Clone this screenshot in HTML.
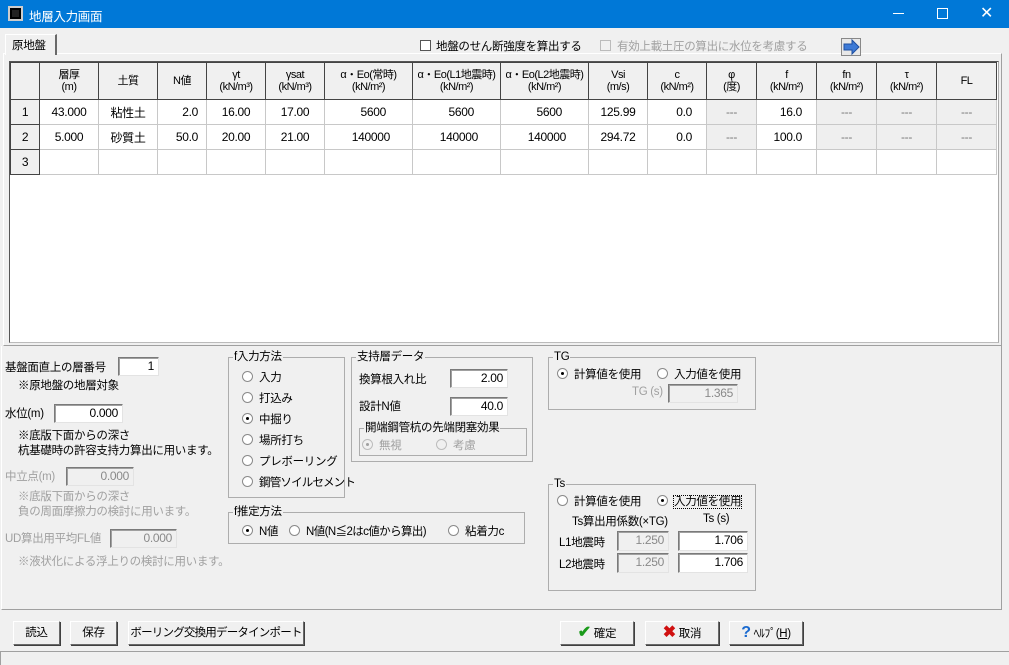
<!DOCTYPE html>
<html><head><meta charset="utf-8"><style>
*{box-sizing:border-box;margin:0;padding:0}
body{width:1009px;height:665px;background:#f0f0f0;font-family:"Liberation Sans","Noto Sans CJK JP",sans-serif;font-size:11.5px;letter-spacing:-0.3px;color:#000;position:relative;overflow:hidden}
.a{position:absolute;white-space:nowrap}
.g{color:#a0a0a0}
.inp{position:absolute;background:#fff;border:1px solid #7a7a7a;border-right-color:#e3e3e3;border-bottom-color:#e3e3e3;box-shadow:inset 1px 1px 0 #a0a0a0;text-align:right;padding-right:4px;font-size:12px;line-height:16px}
.inp.d{background:#f0f0f0;color:#8a8a8a}
.grp{position:absolute;border:1px solid #adadad}
.grp>.t{position:absolute;top:-8px;left:4px;background:#f0f0f0;padding:0 1px;line-height:14px;white-space:nowrap}
.r{display:inline-block;width:11px;height:11px;border-radius:50%;border:1px solid #8a8a8a;background:#fff;vertical-align:-1px;margin-right:6px;position:relative}
.r.on::after{content:"";position:absolute;left:3px;top:3px;width:3px;height:3px;border-radius:50%;background:#000}
.r.dis{background:#f0f0f0;border-color:#bcbcbc}
.r.dis.on::after{background:#a0a0a0}
.btn{position:absolute;border:1px solid #fff;border-right-color:#696969;border-bottom-color:#696969;box-shadow:1px 1px 0 #404040;background:#f0f0f0;text-align:center;line-height:22px;height:24px;white-space:nowrap}
table{position:absolute;left:10px;top:62px;border-collapse:collapse;background:#fff;table-layout:fixed}
td{border:1px solid #c8c8c8;height:25px;text-align:right;padding-right:8px;font-size:12px}
th{background:#f0f0f0;border:1px solid #444;font-weight:normal;font-size:11px;letter-spacing:-0.5px;line-height:12px;height:37px;text-align:center;white-space:nowrap;overflow:hidden}
td.h{background:#f0f0f0;border:1px solid #444;text-align:center;padding:0}
td.gr{background:#efefef;color:#777;text-align:center;padding:0}
td.c{text-align:center;padding:0}
</style></head><body>
<!-- title -->
<div class="a" style="left:0;top:0;width:1009px;height:28px;background:#0078d7"></div>
<div class="a" style="left:8px;top:6px;width:15px;height:15px;background:#222;border:2px solid #ccc;box-shadow:inset 0 0 0 2px #000"></div>
<div class="a" style="left:29px;top:6px;color:#fff;font-size:12.5px">地層入力画面</div>
<div class="a" style="left:893px;top:13px;width:11px;height:1px;background:#fff"></div>
<div class="a" style="left:937px;top:8px;width:11px;height:11px;border:1px solid #fff"></div>
<div class="a" style="left:980px;top:3px;color:#fff;font-size:16px">✕</div>
<!-- tab panel -->
<div class="a" style="left:3px;top:53px;width:999px;height:293px;border:1px solid #fff;border-right-color:#a0a0a0;border-bottom-color:#a0a0a0"></div>
<div class="a" style="left:5px;top:34px;width:52px;height:21px;background:#f0f0f0;border:1px solid #fff;border-right:2px solid #696969;border-bottom:none;padding:2px 0 0 6px">原地盤</div>
<div class="a" style="left:420px;top:40px;width:11px;height:11px;border:1px solid #555;background:#fff"></div>
<div class="a" style="left:436px;top:38px">地盤のせん断強度を算出する</div>
<div class="a" style="left:600px;top:40px;width:11px;height:11px;border:1px solid #bbb;background:#f0f0f0"></div>
<div class="a g" style="left:617px;top:38px">有効上載土圧の算出に水位を考慮する</div>
<svg class="a" style="left:841px;top:38px" width="20" height="18"><rect x="0.5" y="0.5" width="19" height="17" fill="#e8e8e8" stroke="#888"/><path d="M3 6h8V2l7 7-7 7v-4H3z" fill="#3d7ad6" stroke="#1e4fa0"/></svg>
<!-- grid -->
<div class="a" style="left:9px;top:61px;width:990px;height:282px;background:#fff;border:1px solid #555;border-right-color:#aaa;border-bottom-color:#bbb"></div>
<table>
<colgroup><col style="width:29px"><col style="width:59px"><col style="width:59px"><col style="width:49px"><col style="width:59px"><col style="width:59px"><col style="width:88px"><col style="width:88px"><col style="width:88px"><col style="width:59px"><col style="width:59px"><col style="width:50px"><col style="width:60px"><col style="width:60px"><col style="width:60px"><col style="width:60px"></colgroup>
<tr><th></th><th>層厚<br>(m)</th><th>土質</th><th>N値</th><th>γt<br>(kN/m³)</th><th>γsat<br>(kN/m³)</th><th>α・Eo(常時)<br>(kN/m²)</th><th>α・Eo(L1地震時)<br>(kN/m²)</th><th>α・Eo(L2地震時)<br>(kN/m²)</th><th>Vsi<br>(m/s)</th><th>c<br>(kN/m²)</th><th>φ<br>(度)</th><th>f<br>(kN/m²)</th><th>fn<br>(kN/m²)</th><th>τ<br>(kN/m²)</th><th>FL</th></tr>
<tr><td class="h">1</td><td class="c">43.000</td><td class="c">粘性土</td><td>2.0</td><td class="c">16.00</td><td class="c">17.00</td><td style="padding-right:26px">5600</td><td style="padding-right:26px">5600</td><td style="padding-right:26px">5600</td><td class="c">125.99</td><td style="padding-right:14px">0.0</td><td class="gr">---</td><td style="padding-right:14px">16.0</td><td class="gr">---</td><td class="gr">---</td><td class="gr">---</td></tr>
<tr><td class="h">2</td><td class="c">5.000</td><td class="c">砂質土</td><td>50.0</td><td class="c">20.00</td><td class="c">21.00</td><td style="padding-right:22px">140000</td><td style="padding-right:22px">140000</td><td style="padding-right:22px">140000</td><td class="c">294.72</td><td style="padding-right:14px">0.0</td><td class="gr">---</td><td style="padding-right:14px">100.0</td><td class="gr">---</td><td class="gr">---</td><td class="gr">---</td></tr>
<tr><td class="h">3</td><td></td><td></td><td></td><td></td><td></td><td></td><td></td><td></td><td></td><td></td><td></td><td></td><td></td><td></td><td></td></tr>
</table>
<!-- lower frame -->
<div class="a" style="left:1px;top:346px;width:1001px;height:264px;border:1px solid #fff;border-right-color:#a0a0a0;border-bottom-color:#a0a0a0;border-top:none"></div>
<div class="a" style="left:5px;top:359px">基盤面直上の層番号</div>
<div class="inp" style="left:118px;top:357px;width:41px;height:19px">1</div>
<div class="a" style="left:18px;top:377px">※原地盤の地層対象</div>
<div class="a" style="left:5px;top:405px">水位(m)</div>
<div class="inp" style="left:54px;top:404px;width:69px;height:19px">0.000</div>
<div class="a" style="left:18px;top:427px">※底版下面からの深さ</div>
<div class="a" style="left:18px;top:442px">杭基礎時の許容支持力算出に用います。</div>
<div class="a g" style="left:5px;top:468px">中立点(m)</div>
<div class="inp d" style="left:66px;top:467px;width:68px;height:19px">0.000</div>
<div class="a g" style="left:18px;top:488px">※底版下面からの深さ</div>
<div class="a g" style="left:18px;top:503px">負の周面摩擦力の検討に用います。</div>
<div class="a g" style="left:5px;top:530px">UD算出用平均FL値</div>
<div class="inp d" style="left:110px;top:529px;width:67px;height:19px">0.000</div>
<div class="a g" style="left:18px;top:553px">※液状化による浮上りの検討に用います。</div>

<div class="grp" style="left:228px;top:357px;width:117px;height:141px"><span class="t">f入力方法</span></div>
<div class="a" style="left:242px;top:369px"><span class="r"></span>入力</div>
<div class="a" style="left:242px;top:390px"><span class="r"></span>打込み</div>
<div class="a" style="left:242px;top:411px"><span class="r on"></span>中掘り</div>
<div class="a" style="left:242px;top:432px"><span class="r"></span>場所打ち</div>
<div class="a" style="left:242px;top:453px"><span class="r"></span>プレボーリング</div>
<div class="a" style="left:242px;top:474px;letter-spacing:-0.8px"><span class="r"></span>鋼管ソイルセメント</div>

<div class="grp" style="left:351px;top:357px;width:182px;height:105px"><span class="t">支持層データ</span></div>
<div class="a" style="left:359px;top:371px">換算根入れ比</div>
<div class="inp" style="left:450px;top:369px;width:58px;height:19px">2.00</div>
<div class="a" style="left:359px;top:398px">設計N値</div>
<div class="inp" style="left:450px;top:397px;width:58px;height:19px">40.0</div>
<div class="grp" style="left:359px;top:428px;width:168px;height:28px"><span class="t">開端鋼管杭の先端閉塞効果</span></div>
<div class="a g" style="left:362px;top:437px"><span class="r dis on"></span>無視</div>
<div class="a g" style="left:436px;top:437px"><span class="r dis"></span>考慮</div>

<div class="grp" style="left:228px;top:512px;width:297px;height:32px"><span class="t">f推定方法</span></div>
<div class="a" style="left:242px;top:523px"><span class="r on"></span>N値</div>
<div class="a" style="left:289px;top:523px;letter-spacing:-0.6px"><span class="r"></span>N値(N≦2はc値から算出)</div>
<div class="a" style="left:448px;top:523px"><span class="r"></span>粘着力c</div>

<div class="grp" style="left:548px;top:357px;width:208px;height:53px"><span class="t">TG</span></div>
<div class="a" style="left:557px;top:366px"><span class="r on"></span>計算値を使用</div>
<div class="a" style="left:657px;top:366px"><span class="r"></span>入力値を使用</div>
<div class="a g" style="left:632px;top:386px">TG (s)</div>
<div class="inp d" style="left:668px;top:384px;width:70px;height:19px">1.365</div>

<div class="grp" style="left:548px;top:484px;width:208px;height:107px"><span class="t">Ts</span></div>
<div class="a" style="left:557px;top:493px"><span class="r"></span>計算値を使用</div>
<div class="a" style="left:657px;top:493px"><span class="r on"></span><span style="outline:1px dotted #000">入力値を使用</span></div>
<div class="a" style="left:572px;top:513px">Ts算出用係数(×TG)</div>
<div class="a" style="left:703px;top:513px">Ts (s)</div>
<div class="a" style="left:559px;top:534px">L1地震時</div>
<div class="inp d" style="left:617px;top:531px;width:52px;height:20px">1.250</div>
<div class="inp" style="left:678px;top:531px;width:70px;height:20px">1.706</div>
<div class="a" style="left:559px;top:556px">L2地震時</div>
<div class="inp d" style="left:617px;top:553px;width:52px;height:20px">1.250</div>
<div class="inp" style="left:678px;top:553px;width:70px;height:20px">1.706</div>

<!-- buttons -->
<div class="btn" style="left:13px;top:621px;width:47px">読込</div>
<div class="btn" style="left:70px;top:621px;width:47px">保存</div>
<div class="btn" style="left:128px;top:621px;width:176px;letter-spacing:-0.8px">ボーリング交換用データインポート</div>
<div class="btn" style="left:560px;top:621px;width:74px"><span style="color:#1a9a1a;font-size:16px;font-weight:bold">✔</span> 確定</div>
<div class="btn" style="left:645px;top:621px;width:74px"><span style="color:#d01010;font-size:16px;font-weight:bold">✖</span> 取消</div>
<div class="btn" style="left:729px;top:621px;width:74px"><span style="color:#1a6ad0;font-size:16px;font-weight:bold">?</span> ﾍﾙﾌﾟ(<u>H</u>)</div>
<!-- status -->
<div class="a" style="left:0;top:651px;width:1009px;height:14px;border-top:1px solid #a0a0a0;border-left:1px solid #a0a0a0"></div>
</body></html>
